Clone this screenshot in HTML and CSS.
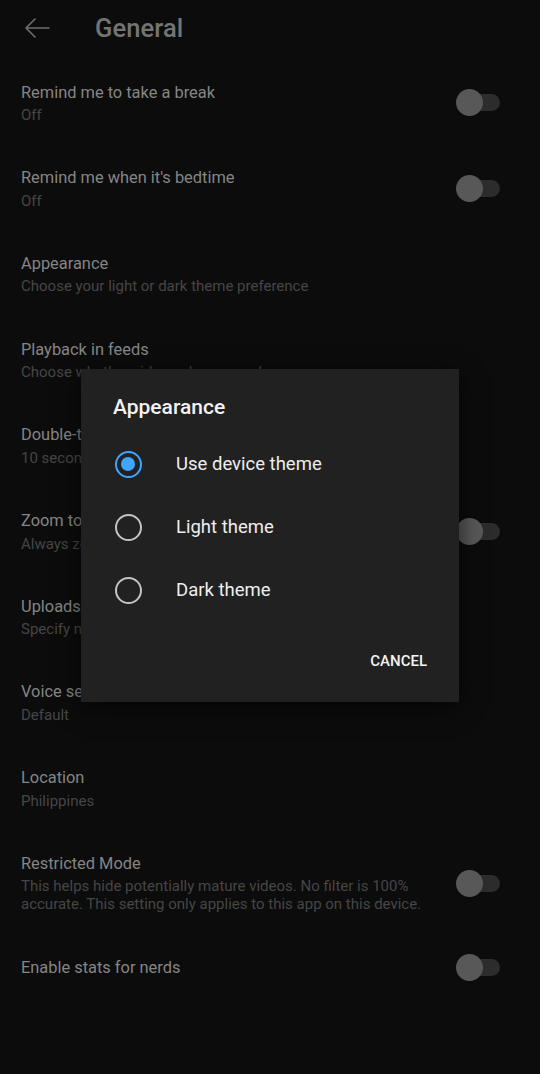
FILE: index.html
```html
<!DOCTYPE html>
<html lang="en">
<head>
<meta charset="utf-8">
<title>General</title>
<link rel="stylesheet" href="styles.css">
</head>
<body>
<div class="screen">
  <header class="topbar">
    <svg class="back" width="26" height="20" viewBox="0 0 26 20" aria-hidden="true">
      <path d="M25 10H2M11 1L2 10L11 19" fill="none" stroke="#6e6e6e" stroke-width="1.6" stroke-linecap="round" stroke-linejoin="round"/>
    </svg>
    <h1 class="page-title">General</h1>
  </header>

  <ul class="settings">
    <li class="row">
      <div class="text"><div class="title">Remind me to take a break</div><div class="sub">Off</div></div>
      <span class="switch"></span>
    </li>
    <li class="row">
      <div class="text"><div class="title">Remind me when it's bedtime</div><div class="sub">Off</div></div>
      <span class="switch"></span>
    </li>
    <li class="row">
      <div class="text"><div class="title">Appearance</div><div class="sub">Choose your light or dark theme preference</div></div>
    </li>
    <li class="row">
      <div class="text"><div class="title">Playback in feeds</div><div class="sub">Choose whether videos play as you browse</div></div>
    </li>
    <li class="row">
      <div class="text"><div class="title">Double-tap to seek</div><div class="sub">10 seconds</div></div>
    </li>
    <li class="row">
      <div class="text"><div class="title">Zoom to fill screen</div><div class="sub">Always zoom to fill</div></div>
      <span class="switch"></span>
    </li>
    <li class="row">
      <div class="text"><div class="title">Uploads</div><div class="sub">Specify network preferences for uploads</div></div>
    </li>
    <li class="row">
      <div class="text"><div class="title">Voice search language</div><div class="sub">Default</div></div>
    </li>
    <li class="row">
      <div class="text"><div class="title">Location</div><div class="sub">Philippines</div></div>
    </li>
    <li class="row">
      <div class="text"><div class="title">Restricted Mode</div><div class="sub">This helps hide potentially mature videos. No filter is 100% accurate. This setting only applies to this app on this device.</div></div>
      <span class="switch"></span>
    </li>
    <li class="row row-single">
      <div class="text"><div class="title">Enable stats for nerds</div></div>
      <span class="switch"></span>
    </li>
  </ul>

  <div class="dialog" role="dialog">
    <h2 class="dialog-title">Appearance</h2>
    <div class="options">
      <div class="option"><span class="radio on"></span><span class="label">Use device theme</span></div>
      <div class="option"><span class="radio"></span><span class="label">Light theme</span></div>
      <div class="option"><span class="radio"></span><span class="label">Dark theme</span></div>
    </div>
    <div class="actions"><span class="btn">CANCEL</span></div>
  </div>
</div>
</body>
</html>
```

FILE: styles.css
```css
* { box-sizing: border-box; }
html, body {
  margin: 0;
  padding: 0;
  background: #0c0c0c;
}
body {
  font-family: Roboto, "Noto Sans", "Liberation Sans", sans-serif;
}
.screen {
  position: relative;
  width: 540px;
  height: 1074px;
  overflow: hidden;
  background: #0c0c0c;
}
.topbar {
  height: 60px;
  display: flex;
  align-items: center;
  padding-left: 24px;
  padding-bottom: 4px;
}
.back { display: block; }
.page-title {
  margin: 0 0 0 45px;
  font-size: 25.5px;
  font-weight: 500;
  color: #747474;
  letter-spacing: 0.1px;
}
.settings {
  list-style: none;
  margin: 0;
  padding: 0;
}
.row {
  display: flex;
  align-items: center;
  padding: 21.6px 40px 21.6px 21px;
}
.row-single {
  padding-top: 19.6px;
}
.text { flex: 1; min-width: 0; }
.title {
  font-size: 16.4px;
  line-height: 22px;
  color: #858585;
}
.sub {
  margin-top: 2.5px;
  font-size: 15px;
  line-height: 18px;
  color: #464646;
  padding-right: 8px;
}
.switch {
  position: relative;
  flex: none;
  width: 44px;
  height: 27px;
  margin-left: 12px;
}
.switch::before {
  content: "";
  position: absolute;
  left: 8px;
  right: 0;
  top: 5px;
  height: 17px;
  border-radius: 9px;
  background: #2c2c2c;
}
.switch::after {
  content: "";
  position: absolute;
  left: 0;
  top: 0;
  width: 27px;
  height: 27px;
  border-radius: 50%;
  background: #585858;
}
.dialog {
  position: absolute;
  left: 81px;
  top: 369px;
  width: 378px;
  height: 333px;
  background: #212121;
  box-shadow: 0 6px 22px rgba(0, 0, 0, 0.65);
  padding: 24px 32px 23px 32px;
  display: flex;
  flex-direction: column;
}
.dialog-title {
  margin: 0;
  font-size: 21px;
  line-height: 28px;
  font-weight: 500;
  color: #f2f2f2;
}
.options {
  margin-top: 11.5px;
  display: flex;
  flex-direction: column;
}
.option {
  height: 63px;
  display: flex;
  align-items: center;
}
.radio {
  flex: none;
  width: 27px;
  height: 27px;
  margin-left: 2px;
  border-radius: 50%;
  border: 2.5px solid #c4c4c4;
  position: relative;
}
.radio.on {
  border-color: #3ea6ff;
}
.radio.on::after {
  content: "";
  position: absolute;
  left: 4px;
  top: 4px;
  width: 14px;
  height: 14px;
  border-radius: 50%;
  background: #3ea6ff;
}
.label {
  margin-left: 34px;
  font-size: 18.5px;
  color: #eeeeee;
}
.actions {
  margin-top: auto;
  display: flex;
  justify-content: flex-end;
}
.btn {
  height: 36px;
  display: flex;
  align-items: center;
  font-size: 15px;
  font-weight: 500;
  color: #f4f4f4;
  letter-spacing: 0;
}
```
